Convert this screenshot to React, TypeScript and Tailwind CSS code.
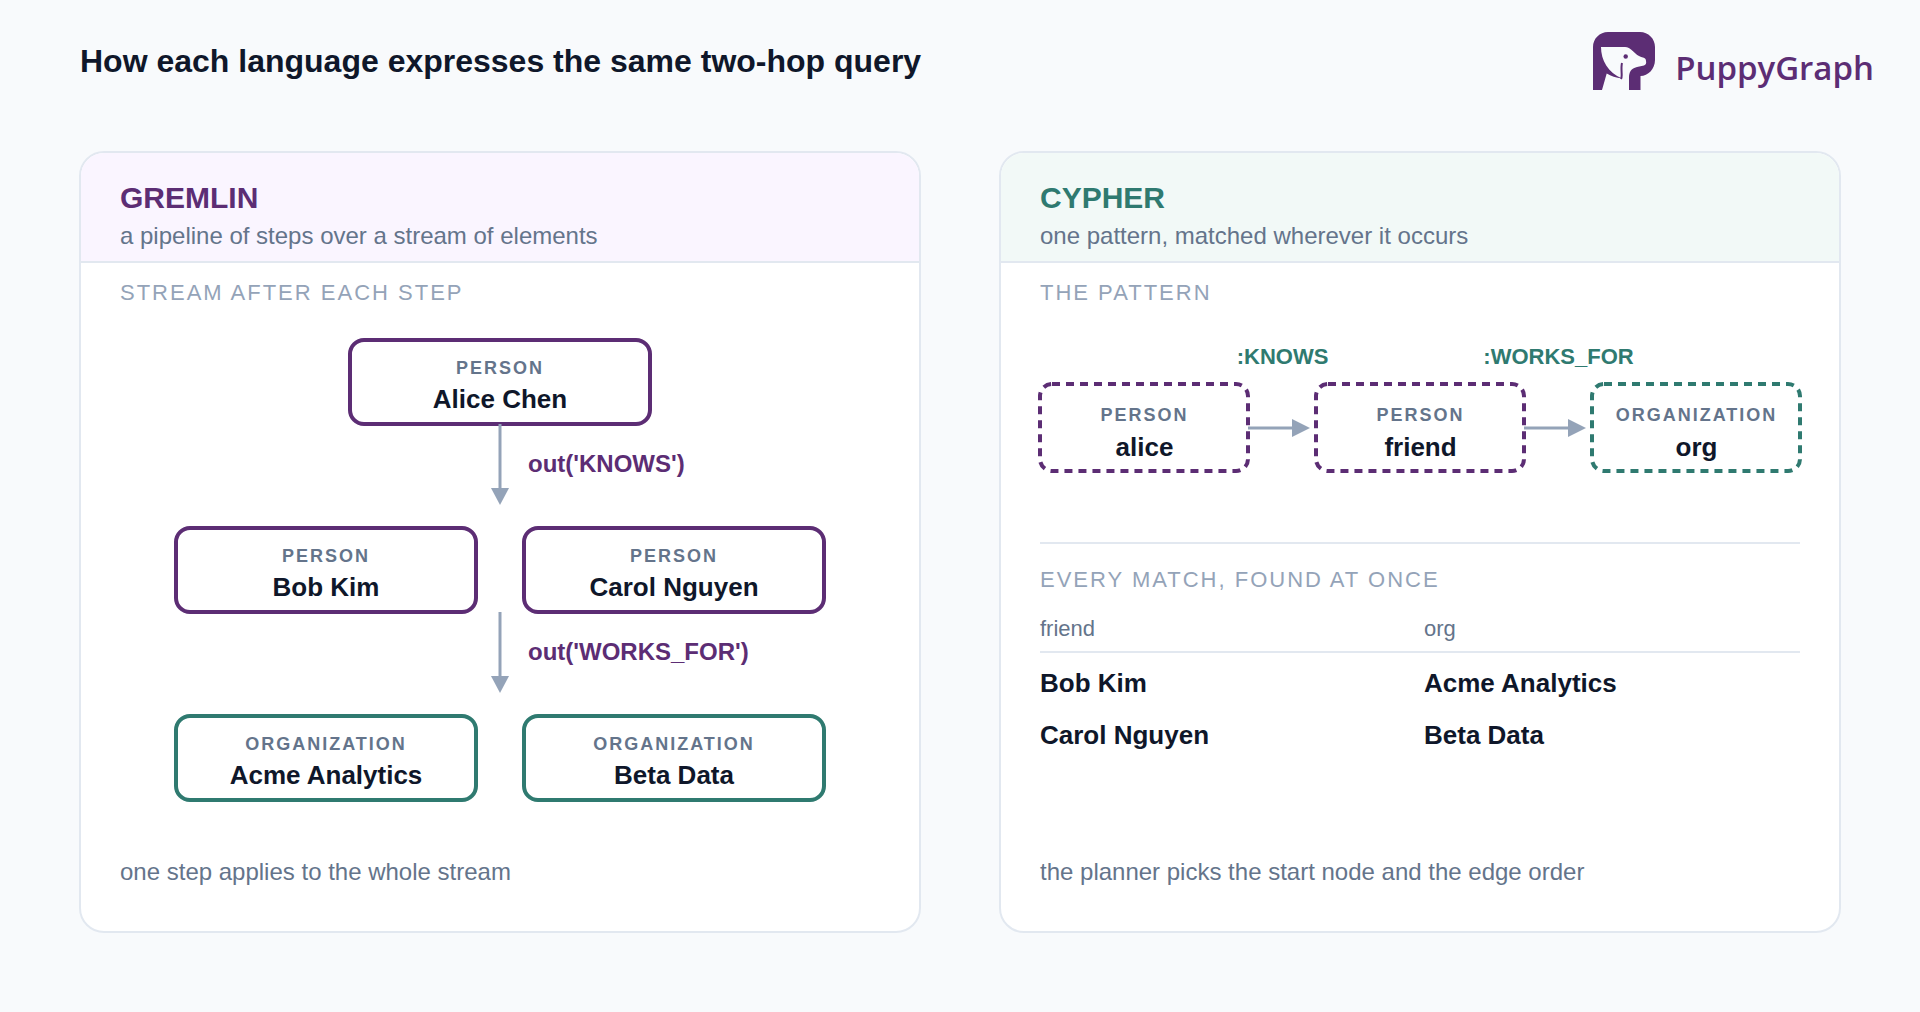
const sans = "font-['Liberation_Sans',Arial,sans-serif]";

function Logo() {
  return (
    <div className="mt-[32px] flex items-start gap-[20px]">
      <svg width="62" height="58" viewBox="0 0 62 58" className="block shrink-0">
        <path
          fill="#5c2d74"
          d="M0 58V15C0 6.700 6.700 0 15 0H47C55.300 0 62 6.700 62 15V28C62 37 55 44 47.500 44V58H36V46C36 40 38 36.500 44 35L51 33.500C53 33 53.500 31 53 29C53 27 52 26 50 25.500C45 24.500 42 21 38 17.500C35 15 33 15 30 15H8C8 28 15 41 29 46.500C23 46 18 44 13.700 41.500L9 58Z"
        />
        <path d="M29 31C28 35 28.700 40 28.700 43C28.700 45 28.500 46 28 47" fill="none" stroke="#5c2d74" strokeWidth="2" />
        <circle cx="32.700" cy="24.500" r="2.200" fill="#5c2d74" />
      </svg>
      <span className="mt-[16px] font-['Open_Sans',sans-serif] text-[33px] font-semibold leading-[40px] text-[#5c2d74]">PuppyGraph</span>
    </div>
  );
}

function Node({ label, name, tone }: { label: string; name: string; tone: "p" | "g" }) {
  return (
    <div className={`${tone === "p" ? "border-[#5c2d74]" : "border-[#2f7a70]"} flex h-[88px] w-[304px] flex-col items-center justify-center rounded-[16px] border-4 bg-white pt-[7px]`}>
      <div className="text-[18px] font-bold leading-[22px] tracking-[2px] text-[#64748b]">{label}</div>
      <div className="mt-[5px] text-[26px] font-bold leading-[30px] text-[#0f172a]">{name}</div>
    </div>
  );
}

function DashedNode({ label, name, color }: { label: string; name: string; color: string }) {
  return (
    <div className="relative flex h-[91px] w-[211px] flex-col items-center justify-center pt-[10px]">
      <svg width="211" height="91" viewBox="0 0 211 91" className="absolute top-0 left-0 overflow-visible">
        <rect x="1" y="2" width="208" height="87" rx="12" fill="none" stroke={color} strokeWidth="4" strokeDasharray="8 6" />
      </svg>
      <div className="text-[18px] font-bold leading-[22px] tracking-[2px] text-[#64748b]">{label}</div>
      <div className="mt-[6px] text-[26px] font-bold leading-[30px] text-[#0f172a]">{name}</div>
    </div>
  );
}

function DownArrow() {
  return (
    <svg width="20" height="81" viewBox="0 0 20 81" className="-mt-[2px] block">
      <line x1="10" y1="0" x2="10" y2="66" stroke="#94a3b8" strokeWidth="3" />
      <polygon points="1,64 19,64 10,81" fill="#94a3b8" />
    </svg>
  );
}

function RightArrow() {
  return (
    <svg width="62" height="20" viewBox="0 0 62 20" className="relative -ml-[2px] block">
      <line x1="0" y1="10" x2="45" y2="10" stroke="#94a3b8" strokeWidth="3" />
      <polygon points="44,1 62,10 44,19" fill="#94a3b8" />
    </svg>
  );
}

function Step({ text }: { text: string }) {
  return (
    <div className="grid h-[100px] grid-cols-[1fr_20px_1fr] items-start gap-x-[18px]">
      <div />
      <DownArrow />
      <div className="pt-[23px] text-[24px] font-bold leading-[30px] whitespace-nowrap text-[#5c2d74]">{text}</div>
    </div>
  );
}

function CardHead({ title, sub, bg, color }: { title: string; sub: string; bg: string; color: string }) {
  return (
    <div className={`${bg} h-[110px] shrink-0 border-b-2 border-[#e2e8f0] px-[39px] pt-[27px]`}>
      <div className={`${color} text-[30px] font-bold leading-[36px]`}>{title}</div>
      <div className="mt-[4px] text-[24px] leading-[32px] text-[#64748b]">{sub}</div>
    </div>
  );
}

function SectionLabel({ children }: { children: string }) {
  return <div className="text-[22px] leading-[28px] tracking-[2px] text-[#94a3b8]">{children}</div>;
}

function Footer({ children }: { children: string }) {
  return <div className="mt-auto mb-[43px] px-[39px] text-[24px] leading-[32px] text-[#64748b]">{children}</div>;
}

const cardClass = "flex h-[782px] w-[842px] flex-col overflow-hidden rounded-[25px] border-2 border-[#e2e8f0] bg-white";
const edgeClass = "flex justify-center whitespace-nowrap text-[22px] font-bold leading-[28px] text-[#2f7a70]";

export default function App() {
  return (
    <div className={`${sans} h-[1012px] w-[1920px] overflow-hidden bg-[#f8fafc]`}>
      <div className="flex h-[151px] items-start justify-between pr-[46px] pl-[80px]">
        <div className="pt-[41px] text-[32px] font-bold leading-[40px] text-[#0f172a]">
          How each language expresses the same two-hop query
        </div>
        <Logo />
      </div>
      <div className="flex gap-[78px] pl-[79px]">
        <div className={cardClass}>
          <CardHead title="GREMLIN" sub="a pipeline of steps over a stream of elements" bg="bg-[#faf5ff]" color="text-[#5c2d74]" />
          <div className="px-[39px] pt-[16px]">
            <SectionLabel>STREAM AFTER EACH STEP</SectionLabel>
          </div>
          <div className="mx-auto mt-[31px] w-[652px]">
            <div className="flex justify-center">
              <Node label="PERSON" name="Alice Chen" tone="p" />
            </div>
            <Step text="out('KNOWS')" />
            <div className="flex justify-between">
              <Node label="PERSON" name="Bob Kim" tone="p" />
              <Node label="PERSON" name="Carol Nguyen" tone="p" />
            </div>
            <Step text="out('WORKS_FOR')" />
            <div className="flex justify-between">
              <Node label="ORGANIZATION" name="Acme Analytics" tone="g" />
              <Node label="ORGANIZATION" name="Beta Data" tone="g" />
            </div>
          </div>
          <Footer>one step applies to the whole stream</Footer>
        </div>

        <div className={cardClass}>
          <CardHead title="CYPHER" sub="one pattern, matched wherever it occurs" bg="bg-[#f2f9f7]" color="text-[#2f7a70]" />
          <div className="px-[39px] pt-[16px]">
            <SectionLabel>THE PATTERN</SectionLabel>
            <div className="mt-[36px] -ml-px grid grid-cols-[211px_65px_211px_65px_211px]">
              <div />
              <div className={edgeClass}>:KNOWS</div>
              <div />
              <div className={edgeClass}>:WORKS_FOR</div>
              <div />
              <div className="col-start-1 mt-[11px]"><DashedNode label="PERSON" name="alice" color="#5c2d74" /></div>
              <div className="mt-[11px] flex items-center"><RightArrow /></div>
              <div className="mt-[11px]"><DashedNode label="PERSON" name="friend" color="#5c2d74" /></div>
              <div className="mt-[11px] flex items-center"><RightArrow /></div>
              <div className="mt-[11px]"><DashedNode label="ORGANIZATION" name="org" color="#2f7a70" /></div>
            </div>
            <div className="mt-[69px] h-[2px] w-[760px] bg-[#e2e8f0]" />
            <div className="mt-[22px]"><SectionLabel>EVERY MATCH, FOUND AT ONCE</SectionLabel></div>
            <div className="mt-[21px] grid w-[760px] grid-cols-[384px_376px] border-b-2 border-[#e2e8f0] pb-[8px] text-[22px] leading-[28px] text-[#64748b]">
              <div>friend</div>
              <div>org</div>
            </div>
            <div className="mt-[15px] grid w-[760px] grid-cols-[384px_376px] gap-y-[22px] text-[26px] font-bold leading-[30px] text-[#0f172a]">
              <div>Bob Kim</div>
              <div>Acme Analytics</div>
              <div>Carol Nguyen</div>
              <div>Beta Data</div>
            </div>
          </div>
          <Footer>the planner picks the start node and the edge order</Footer>
        </div>
      </div>
    </div>
  );
}
